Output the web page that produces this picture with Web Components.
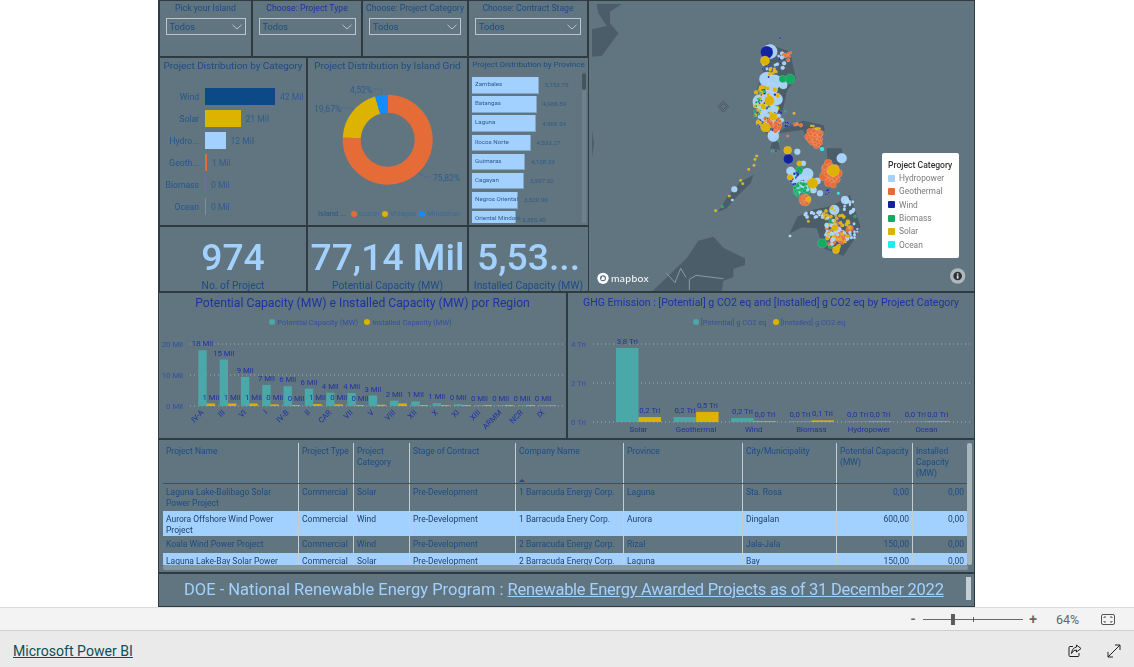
<!doctype html>
<html>
<head>
<meta charset="utf-8">
<title>Microsoft Power BI</title>
<style>
  html, body { margin:0; height:100%; overflow:hidden; background:#fff; font-family:Roboto,"Liberation Sans",sans-serif; }
</style>
</head>
<body>
<ph-app>
  <ph-report>
    <ph-slicer slot="slicers" style="width:93px" label="Pick your Island" box="80">Todos</ph-slicer>
    <ph-slicer slot="slicers" style="width:110px" label="Choose: Project Type" box="97" accent>Todos</ph-slicer>
    <ph-slicer slot="slicers" style="width:106px" label="Choose: Project Category" box="92">Todos</ph-slicer>
    <ph-slicer slot="slicers" style="width:120px" label="Choose: Contract Stage" box="106">Todos</ph-slicer>

    <ph-panel slot="charts" style="width:148px" heading="Project Distribution by Category"><ph-category-bars></ph-category-bars></ph-panel>
    <ph-panel slot="charts" style="width:161px" heading="Project Distribution by Island Grid"><ph-donut></ph-donut></ph-panel>
    <ph-panel slot="charts" style="width:121px" heading="Project Distribution by Province" small><ph-province-bars></ph-province-bars></ph-panel>

    <ph-kpi slot="kpis" style="width:148px" value="974">No. of Project</ph-kpi>
    <ph-kpi slot="kpis" style="width:161px" value="77,14 Mil">Potential Capacity (MW)</ph-kpi>
    <ph-kpi slot="kpis" style="width:121px" value="5,53...">Installed Capacity (MW)</ph-kpi>

    <ph-map slot="map"></ph-map>

    <ph-panel slot="columns" style="width:409px" heading="Potential Capacity (MW) e Installed Capacity (MW) por Region" wide><ph-columns chart="region"></ph-columns></ph-panel>
    <ph-panel slot="columns" style="width:408px" heading="GHG Emission : [Potential] g CO2 eq and [Installed] g CO2 eq by Project Category" wide><ph-columns chart="ghg"></ph-columns></ph-panel>

    <ph-table slot="table"></ph-table>
    <ph-banner slot="banner">DOE - National Renewable Energy Program : <a href="#">Renewable Energy Awarded Projects as of 31 December 2022</a></ph-banner>
  </ph-report>
  <ph-statusbar slot="status"></ph-statusbar>
  <ph-footer slot="footer">Microsoft Power BI</ph-footer>
</ph-app>

<script>
const FONT = `Roboto,"Liberation Sans",sans-serif`;
const SLATE = "#60757f";
const EDGE  = "#2e3b42";
const INK   = "#1c4c86";
const ROYAL = "#1f32a3";
const SKY   = "#a3d1ff";

function shell(el, html) {
  el.attachShadow({ mode: "open" }).innerHTML = html;
}

/* ---------- page frame ---------- */
class PhApp extends HTMLElement {
  connectedCallback() {
    shell(this, `<style>
      :host { display:flex; flex-direction:column; height:667px; width:1134px; font-family:${FONT}; }
      .main { height:607px; padding-left:158px; background:#fff; overflow:hidden; }
    </style>
    <div class="main"><slot></slot></div>
    <slot name="status"></slot>
    <slot name="footer"></slot>`);
  }
}

class PhReport extends HTMLElement {
  connectedCallback() {
    shell(this, `<style>
      :host { display:flex; flex-direction:column; width:817px; height:607px; background:${EDGE}; filter:blur(.3px); }
      .top { display:flex; height:292px; }
      .left { display:flex; flex-direction:column; width:429px; margin-left:1px; flex:none; }
      .row { display:flex; flex:none; }
      .slicers { height:57px; }
      .charts { height:169px; }
      .kpis { height:66px; }
      .mapcell { flex:1; display:flex; }
      .cols { height:147px; }
      .table { height:134px; }
      .banner { height:34px; }
    </style>
    <div class="top">
      <div class="left">
        <div class="row slicers"><slot name="slicers"></slot></div>
        <div class="row charts"><slot name="charts"></slot></div>
        <div class="row kpis"><slot name="kpis"></slot></div>
      </div>
      <div class="mapcell"><slot name="map"></slot></div>
    </div>
    <div class="row cols"><slot name="columns"></slot></div>
    <div class="row table"><slot name="table"></slot></div>
    <div class="row banner"><slot name="banner"></slot></div>`);
  }
}

/* ---------- generic tiles ---------- */
class PhPanel extends HTMLElement {
  connectedCallback() {
    const small = this.hasAttribute("small"), wide = this.hasAttribute("wide");
    const size = wide ? (this.getAttribute("heading").length > 65 ? 10.55 : 12.2) : small ? 8.1 : 9.9;
    const color = wide ? ROYAL : INK;
    shell(this, `<style>
      :host { display:flex; flex-direction:column; box-sizing:border-box; border:1px solid ${EDGE}; background:${SLATE}; flex:none; overflow:hidden; }
      .t { flex:none; box-sizing:border-box; height:${wide ? 20 : small ? 12 : 17}px; padding-top:${wide ? 1 : 0}px; text-align:center; white-space:nowrap; color:${color}; font-size:${size}px; line-height:${wide ? 18 : small ? 12 : 16}px; }
      .b { flex:1; min-height:0; position:relative; display:flex; }
    </style><div class="t">${this.getAttribute("heading")}</div><div class="b"><slot></slot></div>`);
  }
}

class PhSlicer extends HTMLElement {
  connectedCallback() {
    const c = this.hasAttribute("accent") ? ROYAL : INK;
    shell(this, `<style>
      :host { display:flex; flex-direction:column; align-items:center; box-sizing:border-box; border:1px solid ${EDGE}; background:${SLATE}; flex:none; }
      .l { height:16px; font-size:8.700px; line-height:14px; color:${c}; white-space:nowrap; }
      .d { box-sizing:border-box; height:17px; width:${this.getAttribute("box")}px; margin-top:1px; border:1.5px solid #b9c6cc; display:flex; align-items:center; justify-content:space-between; padding:0 3px; color:${INK}; font-size:9.2px; }
      svg { display:block; }
    </style><div class="l">${this.getAttribute("label")}</div>
    <div class="d"><span><slot></slot></span><svg width="10" height="6" viewBox="0 0 10 6"><path d="M.5.8 5 5 9.5.8" fill="none" stroke="#c3ced3" stroke-width=".9"/></svg></div>`);
  }
}

class PhKpi extends HTMLElement {
  connectedCallback() {
    shell(this, `<style>
      :host { display:flex; flex-direction:column; align-items:center; box-sizing:border-box; border:1px solid ${EDGE}; background:${SLATE}; flex:none; overflow:hidden; }
      .v { height:50px; margin-top:3px; font-size:37.300px; line-height:54px; font-weight:500; color:${SKY}; white-space:nowrap; }
      .l { font-size:10.300px; line-height:12px; color:${INK}; white-space:nowrap; }
    </style><div class="v">${this.getAttribute("value")}</div><div class="l"><slot></slot></div>`);
  }
}

/* ---------- category bars ---------- */
const CATEGORY_ROWS = [
  ["Wind", 70, "#0b4a86", "42 Mil"],
  ["Solar", 35.5, "#dbb300", "21 Mil"],
  ["Hydro...", 20.5, SKY, "12 Mil"],
  ["Geoth...", 2, "#e66c37", "1 Mil"],
  ["Biomass", 1, "#16a765", "0 Mil"],
  ["Ocean", 1, "#4aa9a8", "0 Mil"]
];
class PhCategoryBars extends HTMLElement {
  connectedCallback() {
    const rows = CATEGORY_ROWS.map(([n, w, c, v]) => `
      <div class="r"><span class="n">${n}</span><span class="bar" style="width:${w}px;background:${c}"></span><span class="v">${v}</span></div>`).join("");
    shell(this, `<style>
      :host { display:flex; flex-direction:column; gap:5px; padding-top:13px; flex:1; color:#26568c; font-size:8.600px; }
      .r { display:flex; align-items:center; height:17px; white-space:nowrap; }
      .n { width:39px; text-align:right; margin-right:6px; }
      .bar { height:17px; margin-right:5px; }
      .v { color:#2f5c8e; }
    </style>${rows}`);
  }
}

/* ---------- donut ---------- */
class PhDonut extends HTMLElement {
  connectedCallback() {
    const cx = 79.7, cy = 64.7, R = 45, r = 27;
    const pt = (rad, f) => {
      const a = f * 2 * Math.PI - Math.PI / 2;
      return `${(cx + rad * Math.cos(a)).toFixed(2)} ${(cy + rad * Math.sin(a)).toFixed(2)}`;
    };
    const arc = (a, b, c) => `<path fill="${c}" d="M${pt(R, a)}A${R} ${R} 0 ${b - a > .5 ? 1 : 0} 1 ${pt(R, b)}L${pt(r, b)}A${r} ${r} 0 ${b - a > .5 ? 1 : 0} 0 ${pt(r, a)}Z"/>`;
    shell(this, `<style>
      :host { display:block; flex:1; position:relative; font-size:8.600px; color:#2f5c8e; }
      svg { position:absolute; left:0; top:0; }
      .legend { position:absolute; left:10px; top:133px; display:flex; align-items:center; gap:2px; white-space:nowrap; font-size:7.500px; line-height:12px; color:#3f6b95; }
      .legend b { font-weight:400; color:#26568c; margin-right:3px; }
      .legend i { flex:none; width:6px; height:6px; border-radius:50%; display:inline-block; }
      .legend span { margin-right:1px; }
    </style>
    <svg width="159" height="150">
      ${arc(0, .7582, "#e66c37")}${arc(.7582, .9549, "#dbb300")}${arc(.9549, 1, "#118dff")}
      <g fill="none" stroke="#3f6a93" stroke-width=".7">
        <path d="M110 98l7 4h6M65 14h9v6M32 33h12l1 2"/>
      </g>
      <g fill="#2f5c8e" font-family='${FONT}' font-size="8.6">
        <text x="125" y="106">75,82%</text>
        <text x="6" y="37">19,67%</text>
        <text x="42" y="18">4,52%</text>
      </g>
    </svg>
    <div class="legend"><b>Island ...</b><i style="background:#e66c37"></i><span>Luzon</span><i style="background:#dbb300"></i><span>Visayas</span><i style="background:#118dff"></i><span>Mindanao</span></div>`);
  }
}

/* ---------- province bars ---------- */
const PROVINCES = [
  ["Zambales", 66.7, "5,153.75"], ["Batangas", 64.5, "4,988.59"], ["Laguna", 64.2, "4,968.54"],
  ["Ilocos Norte", 58.6, "4,533.27"], ["Guimaras", 53, "4,108.33"], ["Cagayan", 52, "3,997.32"],
  ["Negros Oriental", 46, "3,520.90"], ["Oriental Mindoro", 44, "3,385.40"]
];
class PhProvinceBars extends HTMLElement {
  connectedCallback() {
    const rows = PROVINCES.map(([n, w, v]) => `
      <div class="r"><span class="bar" style="width:${w}px">${n}</span><span class="v">${v}</span></div>`).join("");
    shell(this, `<style>
      :host { display:block; flex:1; position:relative; overflow:hidden; height:155px; padding:7px 0 0 3px; box-sizing:border-box; font-size:6.200px; }
      .list { height:146px; overflow:hidden; display:flex; flex-direction:column; gap:2.7px; }
      .r { display:flex; align-items:center; flex:none; height:16.5px; white-space:nowrap; }
      .bar { box-sizing:border-box; height:16.5px; background:${SKY}; border-right:1px solid #7fa6cc; border-bottom:1px solid #7fa6cc; padding-left:3px; line-height:15px; color:#2c5a92; flex:none; overflow:visible; }
      .v { margin-left:6px; color:#2f5a86; }
      .sb { position:absolute; right:2px; top:3px; width:4px; height:150px; background:#6e828b; }
      .sb i { display:block; width:4px; height:17px; background:#46555d; border-radius:2px; }
    </style><div class="list">${rows}</div><div class="sb"><i></i></div>`);
  }
}

/* ---------- map ---------- */
const HYDRO = "#a6d1fa", GEO = "#e66c37", WIND = "#12239e", BIO = "#11ab61", SOLAR = "#dbb300", OCEAN = "#1af0f0";
const BIG_BUBBLES = [
  [540,155,22,HYDRO],[530,238,22,HYDRO],[555,245,21,HYDRO],[545,268,18,HYDRO],[580,255,12,HYDRO],[510,305,22,HYDRO],[560,298,18,HYDRO],[535,285,16,HYDRO],
  [525,350,15,HYDRO],[550,330,14,HYDRO],[550,408,17,HYDRO],[755,475,15,HYDRO],[622,455,9,HYDRO],[433,568,9,HYDRO],[602,513,13,HYDRO],[652,522,18,HYDRO],[682,543,10,HYDRO],
  [690,580,9,HYDRO],[765,600,12,HYDRO],[733,630,15,HYDRO],[755,705,15,HYDRO],[728,668,11,HYDRO],
  [615,540,12,HYDRO],[640,490,8,HYDRO],[670,570,10,HYDRO],[610,520,10,HYDRO],[745,690,10,HYDRO],[770,715,8,HYDRO],[715,700,9,HYDRO],
  [530,157,19,WIND],[595,477,15,WIND],
  [675,398,15,GEO],[668,422,14,GEO],[685,418,13,GEO],[660,395,10,GEO],[655,410,11,GEO],[690,400,10,GEO],[680,435,11,GEO],
  [708,505,14,GEO],[722,530,17,GEO],[740,538,11,GEO],[703,520,10,GEO],[715,490,12,GEO],[735,505,12,GEO],[700,530,12,GEO],[715,548,12,GEO],[745,520,12,GEO],[730,555,9,GEO],
  [645,600,18,GEO],[745,710,13,GEO],[780,685,10,GEO],[730,720,10,GEO],[760,720,8,GEO],[775,690,8,GEO],[515,340,9,GEO],[565,375,11,GEO],
  [600,237,15,BIO],[578,237,11,BIO],[697,730,14,BIO],[628,510,11,BIO],[635,560,18,BIO],[725,665,9,BIO],[722,738,8,BIO],[620,575,11,BIO],[650,570,12,BIO],[625,520,9,BIO],
  [525,182,14,SOLAR],[593,451,12,SOLAR],[730,512,18,SOLAR],[668,550,16,SOLAR],[526,382,14,SOLAR],[538,302,15,SOLAR],[550,350,12,SOLAR],
  [628,490,8,SOLAR],[738,750,11,SOLAR],[735,683,10,SOLAR],[655,598,8,SOLAR],[600,532,9,SOLAR],[520,320,8,SOLAR],[745,740,7,SOLAR],[712,715,6,SOLAR],
  [696,447,6,OCEAN],[745,580,4,OCEAN]
];
// cx, cy, rx, ry, count, colour, r
const SMALL_CLUSTERS = [
  [545,190,30,45,22,WIND,3],[560,185,45,30,14,HYDRO,5],[590,170,14,14,9,GEO,4.5],[550,215,18,12,8,SOLAR,5],
  [530,320,42,65,46,SOLAR,5.5],[535,330,40,70,30,WIND,3],[525,330,34,60,24,BIO,3.5],[540,350,40,60,32,HYDRO,6],[545,370,28,25,18,GEO,6],
  [595,373,12,8,7,WIND,3],[625,372,14,6,7,GEO,4.5],[670,382,22,8,6,SOLAR,3.5],[675,415,20,24,30,GEO,6],
  [625,535,28,22,20,WIND,3],[640,555,30,30,22,HYDRO,5],[630,565,20,24,14,BIO,5],[645,600,14,14,12,GEO,5],
  [708,575,10,8,6,WIND,3],[722,515,22,28,30,GEO,6.5],[675,645,30,12,18,HYDRO,4.5],[770,620,26,24,16,HYDRO,4.5],
  [720,640,22,20,11,SOLAR,4.5],[735,700,32,45,30,GEO,5],[745,690,35,50,22,SOLAR,5],[730,690,30,50,20,HYDRO,5],[790,690,16,26,10,HYDRO,4]
];
const LINE_DOTS = [
  [570,114,3,WIND],[612,340,4,SOLAR],[586,334,3,BIO],[500,468,4,SOLAR],[495,478,4,SOLAR],[492,496,4,SOLAR],[476,508,4,SOLAR],
  [452,541,4,SOLAR],[458,551,4,SOLAR],[418,588,4,SOLAR],[427,600,4,HYDRO],[397,620,4,BIO],[377,632,4,SOLAR],[600,708,4,HYDRO],
  [548,453,4,BIO],[558,453,3,WIND],[593,408,4,GEO],[565,422,3,BIO],[602,158,4,GEO],[795,649,4,BIO],[655,664,4,SOLAR]
];
class PhMap extends HTMLElement {
  connectedCallback() {
    let seed = 97;
    const rnd = () => (seed = (seed * 16807) % 2147483647) / 2147483647;
    const dots = [...LINE_DOTS];
    for (const [cx, cy, rx, ry, n, c, r] of SMALL_CLUSTERS) {
      for (let i = 0; i < n; i++) {
        const a = rnd() * 6.283, d = Math.sqrt(rnd());
        dots.push([cx + Math.cos(a) * rx * d, cy + Math.sin(a) * ry * d, r * (.75 + rnd() * .5), c]);
      }
    }
    const circle = ([x, y, r, c]) => `<circle cx="${x.toFixed(1)}" cy="${y.toFixed(1)}" r="${r.toFixed(1)}" fill="${c}"/>`;
    const swatches = [["Hydropower", HYDRO], ["Geothermal", GEO], ["Wind", WIND], ["Biomass", BIO], ["Solar", SOLAR], ["Ocean", OCEAN]]
      .map(([n, c]) => `<div class="e"><i style="background:${c}"></i>${n}</div>`).join("");
    shell(this, `<style>
      :host { display:block; position:relative; flex:1; box-sizing:border-box; border:1px solid ${EDGE}; background:${SLATE}; overflow:hidden; }
      svg { position:absolute; left:0; top:0; display:block; }
      .legend { position:absolute; left:293px; top:152px; width:77px; height:105px; box-sizing:border-box; background:#fff; border-radius:2px; padding:7px 0 0 6px; font-size:8.400px; color:#7b7b7b; }
      .legend h4 { margin:0 0 .5px; font-size:8.600px; line-height:11px; font-weight:500; color:#333; white-space:nowrap; }
      .e { display:flex; align-items:center; height:13.3px; gap:4px; white-space:nowrap; }
      .e i { width:7px; height:7px; border-radius:1px; }
    </style>
    <svg width="385" height="290" viewBox="-3 3 1155 870">
      <g fill="#4a5d69">
        <path d="M20 12H95L60 35V70L85 100 35 168 6 170V88L50 78 25 40Z"/>
        <path d="M6 390 12 430 6 472Z"/>
        <path d="M530 130 600 155 618 238 592 270 578 330 560 390 540 445 570 450 560 400 590 380 640 362 700 375 705 392 680 395 700 445 650 420 640 390 560 400 525 400 500 340 500 270 520 210Z"/>
        <path d="M490 525 482 550 440 590 410 625 384 636 412 590 452 545Z"/>
        <path d="M710 445H755L762 480 745 500 712 480Z"/>
        <path d="M598 702 622 650 665 630 725 618 780 585 812 680 790 722 760 768 700 745 680 685 635 682Z"/>
        <path d="M188 873 290 775 325 722 370 710 402 745 465 775 465 795 430 806 430 832 400 842 395 873Z"/>
      </g>
      <g fill="none" stroke="#8c9aa1" stroke-width="3">
        <path d="M228 818 255 848 272 805 288 832"/>
        <path d="M298 870V838L318 826 400 836"/>
      </g>
      <path d="M400 304 416 320 400 336 384 320ZM400 311 409 320 400 329 391 320Z" fill="none" stroke="#3d4c55" stroke-width="2"/>
      <g stroke="rgba(255,255,255,.28)" stroke-width="1.5">
        ${BIG_BUBBLES.filter(b => b[3] === HYDRO).map(circle).join("")}
        ${BIG_BUBBLES.filter(b => b[3] === GEO).map(circle).join("")}
        ${BIG_BUBBLES.filter(b => b[3] === BIO).map(circle).join("")}
        ${dots.map(circle).join("")}
        ${BIG_BUBBLES.filter(b => b[3] === WIND || b[3] === SOLAR || b[3] === OCEAN).map(circle).join("")}
      </g>
      <circle cx="39" cy="835" r="17" fill="#fff"/>
      <circle cx="39" cy="835" r="9" fill="#60757f"/>
      <path d="M33 840 37 829 45 833 43 840Z" fill="#fff"/>
      <text x="63" y="846" fill="#fff" font-family="Lato,sans-serif" font-size="31" font-weight="400" letter-spacing="1">mapbox</text>
      <circle cx="1103" cy="828" r="23" fill="#aeb8bd"/>
      <circle cx="1103" cy="828" r="13" fill="#2c3236"/>
      <rect x="1100.500" y="826" width="5" height="10" fill="#dfe4e6"/>
      <rect x="1100.500" y="820" width="5" height="4" fill="#dfe4e6"/>
    </svg>
    <div class="legend"><h4>Project Category</h4>${swatches}</div>`);
  }
}

/* ---------- clustered columns ---------- */
const TEAL = "#4aa9a8", GOLD = "#dbb300";
const CHARTS = {
  region: {
    left: 159, top: 312, legendA: "Potential Capacity (MW)", legendB: "Installed Capacity (MW)",
    grid: [["20 Mil", 343], ["10 Mil", 374], ["0 Mil", 405]], gridX: [190, 563], labelX: 183,
    base: 405, first: 198.3, pitch: 21.3, bw: 8.4, unit: 3.1, font: 7.8,
    groups: [
      ["IV-A",18,.8,"18 Mil","1 Mil"],["III",15,.8,"15 Mil","1 Mil"],["VI",9.4,.8,"9 Mil","1 Mil"],["I",6.8,.5,"7 Mil","0 Mil"],
      ["IV-B",6.4,.3,"6 Mil","0 Mil"],["II",5.6,.6,"6 Mil","1 Mil"],["CAR",4.3,.5,"4 Mil","0 Mil"],["VII",4.2,.3,"4 Mil","0 Mil"],
      ["V",3.4,.4,"3 Mil",""],["VIII",1.7,.8,"2 Mil",""],["XII",1.5,.3,"1 Mil",""],["X",.9,.3,"1 Mil",""],["XI",.6,.3,"0 Mil",""],
      ["XIII",.3,.3,"0 Mil",""],["ARMM",.3,.3,"0 Mil",""],["NCR",.2,.3,"0 Mil",""],["IX",.3,0,"0 Mil",""]
    ],
    rotate: true
  },
  ghg: {
    left: 568, top: 312, legendA: "[Potential] g CO2 eq", legendB: "[Installed] g CO2 eq",
    grid: [["4 Tri", 343], ["2 Tri", 382], ["0 Tri", 421]], gridX: [593, 973], labelX: 586,
    base: 421, first: 616, pitch: 57.6, bw: 22.5, unit: 19.5, font: 7.8,
    groups: [
      ["Solar",3.8,.25,"3,8 Tri","0,2 Tri"],["Geothermal",.25,.52,"0,2 Tri","0,5 Tri"],["Wind",.2,.04,"0,2 Tri","0,0 Tri"],
      ["Biomass",.04,.08,"0,0 Tri","0,1 Tri"],["Hydropower",0,0,"0,0 Tri","0,0 Tri"],["Ocean",0,0,"0,0 Tri","0,0 Tri"]
    ]
  }
};
class PhColumns extends HTMLElement {
  connectedCallback() {
    const c = CHARTS[this.getAttribute("chart")];
    const X = x => (x - c.left).toFixed(1), Y = y => (y - c.top).toFixed(1);
    let g = "";
    for (const [label, y] of c.grid) {
      g += `<line x1="${X(c.gridX[0])}" x2="${X(c.gridX[1])}" y1="${Y(y)}" y2="${Y(y)}" stroke="#9fb0b8" stroke-width="1" stroke-dasharray="1 3"/>`;
      g += `<text x="${X(c.labelX)}" y="${Y(y + 3)}" text-anchor="end" fill="#3450a0">${label}</text>`;
    }
    c.groups.forEach(([name, a, b, la, lb], i) => {
      const x = c.first + c.pitch * i, ha = Math.max(a * c.unit, .6), hb = Math.max(b * c.unit, .6);
      g += `<rect x="${X(x)}" y="${Y(c.base - ha)}" width="${c.bw}" height="${ha}" fill="${TEAL}"/>`;
      g += `<rect x="${X(x + c.bw)}" y="${Y(c.base - hb)}" width="${c.bw}" height="${hb}" fill="${GOLD}"/>`;
      if (la) g += `<text x="${X(x + c.bw / 2)}" y="${Y(c.base - ha - 4)}" text-anchor="middle" fill="${ROYAL}">${la}</text>`;
      if (lb) g += `<text x="${X(x + c.bw * 1.5)}" y="${Y(c.base - hb - 4)}" text-anchor="middle" fill="${ROYAL}">${lb}</text>`;
      if (c.rotate) {
        g += `<text transform="translate(${X(x + c.bw * .7)} ${Y(c.base + 7)}) rotate(-45)" text-anchor="end" fill="${ROYAL}">${name}</text>`;
      } else {
        g += `<text x="${X(x + c.bw)}" y="${Y(c.base + 10)}" text-anchor="middle" fill="${ROYAL}">${name}</text>`;
      }
    });
    shell(this, `<style>
      :host { display:flex; flex-direction:column; flex:1; position:relative; }
      .legend { display:flex; justify-content:center; align-items:center; gap:2px; height:12px; margin-top:3px; font-size:7.500px; color:#3450a0; white-space:nowrap; }
      .legend i { width:6px; height:6px; border-radius:50%; }
      .legend span { margin-right:4px; }
      svg { position:absolute; left:0; top:0; font-family:${FONT}; font-size:${c.font}px; }
    </style>
    <div class="legend"><i style="background:${TEAL}"></i><span>${c.legendA}</span><i style="background:${GOLD}"></i><span>${c.legendB}</span></div>
    <svg width="407" height="125">${g}</svg>`);
  }
}

/* ---------- table ---------- */
const TABLE_COLS = [135, 55, 56, 106, 108, 119, 94, 76, 55];
const TABLE_HEAD = ["Project Name", "Project Type", "Project Category", "Stage of Contract", "Company Name", "Province", "City/Municipality", "Potential Capacity (MW)", "Installed Capacity (MW)"];
const TABLE_ROWS = [
  { h: 27, sel: false, c: ["Laguna Lake-Balibago Solar Power Project", "Commercial", "Solar", "Pre-Development", "1 Barracuda Energy Corp.", "Laguna", "Sta. Rosa", "0,00", "0,00"] },
  { h: 25, sel: true,  c: ["Aurora Offshore Wind Power Project", "Commercial", "Wind", "Pre-Development", "1 Barracuda Enery Corp.", "Aurora", "Dingalan", "600,00", "0,00"] },
  { h: 17, sel: false, c: ["Koala Wind Power Project", "Commercial", "Wind", "Pre-Development", "2 Barracuda Energy Corp.", "Rizal", "Jala-Jala", "150,00", "0,00"] },
  { h: 12, sel: true,  c: ["Laguna Lake-Bay Solar Power", "Commercial", "Solar", "Pre-Development", "2 Barracuda Energy Corp.", "Laguna", "Bay", "150,00", "0,00"] }
];
class PhTable extends HTMLElement {
  connectedCallback() {
    const tpl = TABLE_COLS.map(w => w + "px").join(" ");
    const head = TABLE_HEAD.map((t, i) => `<div class="c${i ? " ln" : ""}">${t}${i === 4 ? '<span class="sort"></span>' : ""}</div>`).join("");
    const rows = TABLE_ROWS.map(r => `<div class="row${r.sel ? " sel" : ""}" style="height:${r.h}px">${r.c.map((t, i) =>
      `<div class="c${i ? " ln" : ""}${i > 6 ? " num" : ""}">${t}</div>`).join("")}</div>`).join("");
    shell(this, `<style>
      :host { display:block; position:relative; flex:1; box-sizing:border-box; border:1px solid ${EDGE}; background:${SLATE}; padding:3px 0 0 4px; font-size:8.500px; line-height:11px; color:${INK}; overflow:hidden; }
      .row, .head { display:grid; width:804px; grid-template-columns:${tpl}; overflow:hidden; }
      .head { box-sizing:border-box; height:41px; border-bottom:1px solid #1d5a88; }
      .head .c { padding:3px 0 0 3px; }
      .c { position:relative; box-sizing:border-box; padding:3px 3px 0; overflow:hidden; }
      .ln { border-left:1px solid #c3ced3; }
      .num { text-align:right; }
      .sel { background:${SKY}; color:#1d3f68; }
      .sort { position:absolute; left:3px; bottom:1px; width:0; height:0; border:3px solid transparent; border-bottom:3px solid ${INK}; border-top:0; }
      .vs { position:absolute; left:808px; top:3px; width:5px; height:122px; background:#a9b5ba; border-radius:2px; }
      .hs { position:absolute; left:4px; top:125px; width:805px; height:5px; background:#8496a0; border-radius:2px; }
    </style><div class="head">${head}</div>${rows}<div class="vs"></div><div class="hs"></div>`);
  }
}

class PhBanner extends HTMLElement {
  connectedCallback() {
    shell(this, `<style>
      :host { display:flex; align-items:center; position:relative; flex:1; box-sizing:border-box; border:1px solid ${EDGE}; background:${SLATE}; padding-left:25px; padding-bottom:1px; font-size:16.500px; color:${SKY}; white-space:pre; }
      ::slotted(a) { color:${SKY}; text-decoration:underline; letter-spacing:-.27px; }
      .sb { position:absolute; right:3px; top:3px; width:5px; height:23px; background:#c5ced2; }
    </style><slot></slot><div class="sb"></div>`);
  }
}

/* ---------- browser chrome under the report ---------- */
class PhStatusbar extends HTMLElement {
  connectedCallback() {
    shell(this, `<style>
      :host { display:flex; align-items:center; justify-content:flex-end; box-sizing:border-box; height:24px; background:#f3f3f3; border-top:1px solid #dcdcdc; border-bottom:1px solid #cfcfcf; color:#666; font-size:12.500px; padding-right:19px; }
      .pm { width:8px; text-align:center; font-weight:600; font-size:14px; line-height:14px; }
      .track { position:relative; width:100px; height:1px; margin:0 6px; background:#6a6a6a; }
      .thumb { position:absolute; left:28px; top:-5px; width:4px; height:11px; background:#5c5c5c; }
      .tick { position:absolute; left:50px; top:-2px; width:1px; height:5px; background:#5c5c5c; }
      .pct { margin:0 23px 0 19px; width:22px; white-space:nowrap; }
      svg { display:block; }
    </style>
    <span class="pm">-</span><div class="track"><span class="thumb"></span><span class="tick"></span></div><span class="pm">+</span>
    <span class="pct">64%</span>
    <svg width="14" height="11" viewBox="0 0 14 11"><rect x=".5" y=".5" width="13" height="10" rx="1.500" fill="none" stroke="#555"/><path d="M3 4V3H5M9 3H11V4M11 7V8H9M5 8H3V7" fill="none" stroke="#555"/></svg>`);
  }
}

class PhFooter extends HTMLElement {
  connectedCallback() {
    shell(this, `<style>
      :host { display:flex; align-items:center; justify-content:space-between; box-sizing:border-box; height:36px; background:#eaeaea; padding:4px 13px 0; }
      a { font-size:14.100px; color:#0f4f5c; text-decoration:underline; font-weight:400; }
      .icons { display:flex; gap:25px; }
      svg { display:block; }
    </style>
    <a href="#"><slot></slot></a>
    <div class="icons">
      <svg width="14" height="14" viewBox="0 0 14 14" fill="none" stroke="#222" stroke-width="1"><path d="M5 2.500H2Q1 2.500 1 3.500V11.500Q1 12.500 2 12.500H10Q11 12.500 11 11.500V9"/><path d="M8.500 1 13 4.500 8.500 8V6Q5 6 3.500 9.500 4 4 8.500 3Z"/></svg>
      <svg width="14" height="14" viewBox="0 0 14 14" fill="none" stroke="#222" stroke-width="1"><path d="M1 13 13 1M8 1H13V6M1 8V13H6"/></svg>
    </div>`);
  }
}

customElements.define("ph-app", PhApp);
customElements.define("ph-report", PhReport);
customElements.define("ph-panel", PhPanel);
customElements.define("ph-slicer", PhSlicer);
customElements.define("ph-kpi", PhKpi);
customElements.define("ph-category-bars", PhCategoryBars);
customElements.define("ph-donut", PhDonut);
customElements.define("ph-province-bars", PhProvinceBars);
customElements.define("ph-map", PhMap);
customElements.define("ph-columns", PhColumns);
customElements.define("ph-table", PhTable);
customElements.define("ph-banner", PhBanner);
customElements.define("ph-statusbar", PhStatusbar);
customElements.define("ph-footer", PhFooter);
</script>
</body>
</html>
